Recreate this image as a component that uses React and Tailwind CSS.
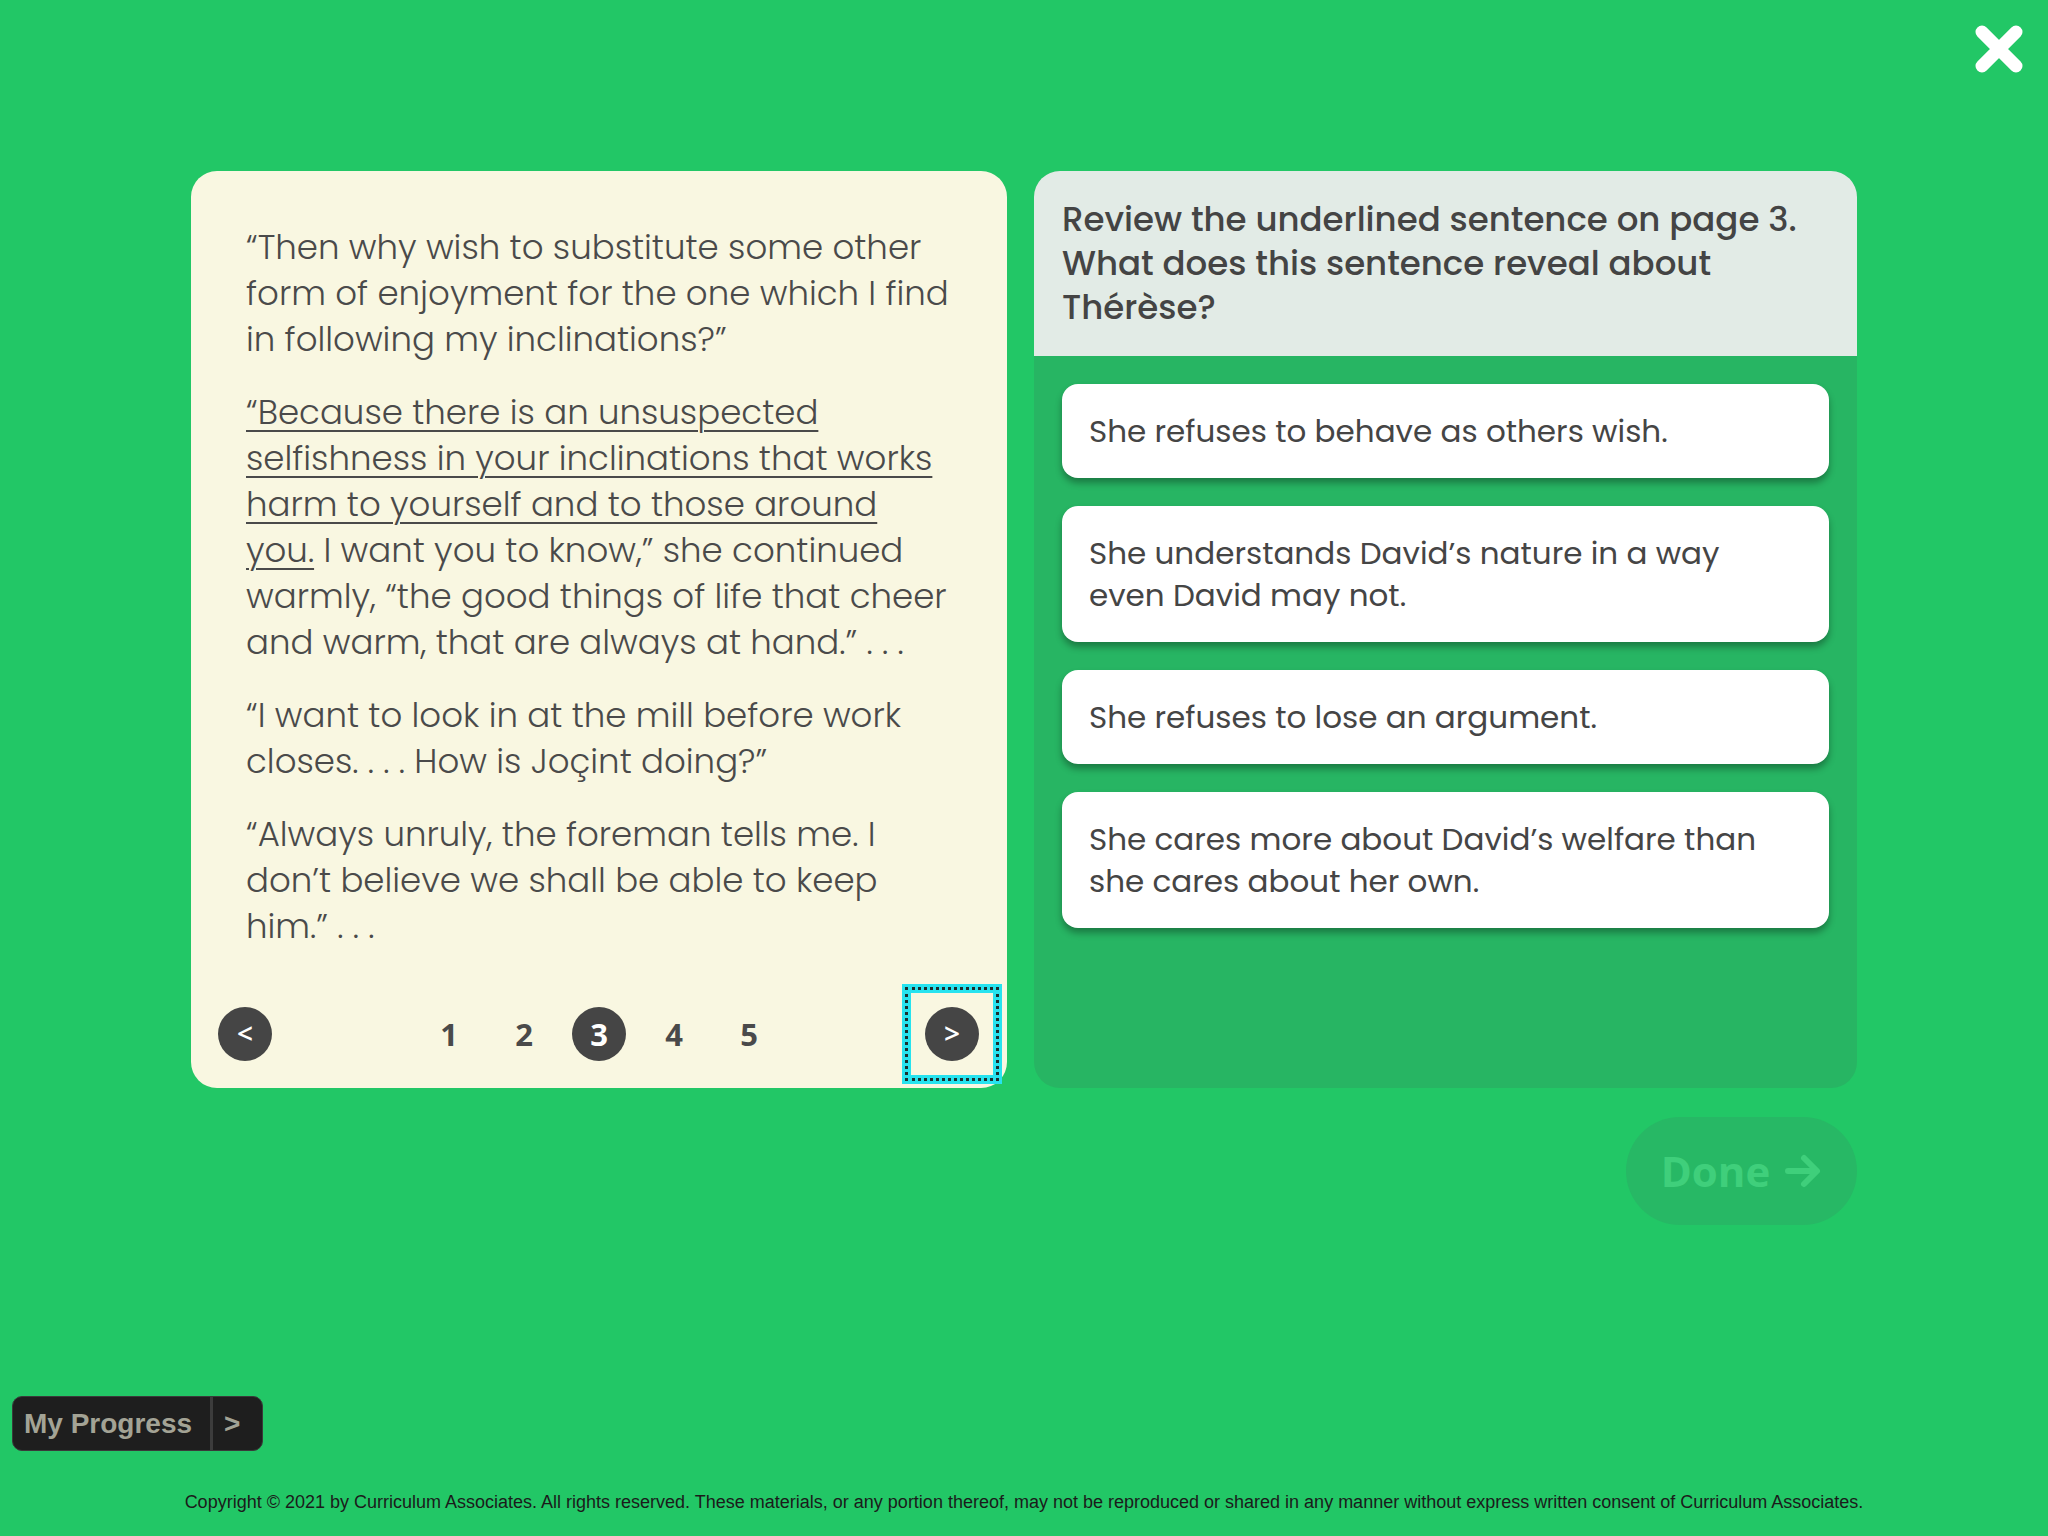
import React from "react";

function CloseIcon() {
  return (
    <svg width="54" height="54" viewBox="0 0 54 54" aria-hidden="true">
      <path d="M10 10 L44 44 M44 10 L10 44" stroke="#ffffff" strokeWidth="13" strokeLinecap="round" fill="none" />
    </svg>
  );
}

function Circle({ children }) {
  return (
    <div className="w-[54px] h-[54px] rounded-full bg-[#454545] text-white flex items-center justify-center text-[28px] font-semibold font-['Open_Sans',sans-serif] leading-none pb-[3px]">
      {children}
    </div>
  );
}

function PageNum({ n, active }) {
  return (
    <div
      className={
        active
          ? "w-[54px] h-[54px] rounded-full bg-[#454545] text-white flex items-center justify-center text-[31px] font-bold font-['Open_Sans',sans-serif]"
          : "w-[54px] h-[54px] flex items-center justify-center text-[31px] font-bold font-['Open_Sans',sans-serif] text-[#4a4a4a]"
      }
    >
      {n}
    </div>
  );
}

const answers = [
  "She refuses to behave as others wish.",
  "She understands David\u2019s nature in a way even David may not.",
  "She refuses to lose an argument.",
  "She cares more about David\u2019s welfare than she cares about her own.",
];

export default function App() {
  return (
    <div className="relative w-full h-[1536px] bg-[#22c766] flex flex-col font-['Poppins','Open_Sans',sans-serif] overflow-hidden">
      <button className="absolute top-[22px] right-[22px]" aria-label="Close">
        <CloseIcon />
      </button>

      <div className="pt-[171px] pl-[191px] flex gap-[27px]">
        {/* Passage card */}
        <div className="w-[816px] h-[917px] bg-[#f9f7e1] rounded-[26px] flex flex-col">
          <div className="pt-[53px] pl-[55px] pr-[55px] text-[#4a4a4a] text-[34px] leading-[46px] font-light flex flex-col gap-[27px]">
            <p>“Then why wish to substitute some other form of enjoyment for the one which I find in following my inclinations?”</p>
            <p>
              <span className="underline decoration-[2px] underline-offset-[6px]">
                “Because there is an unsuspected selfishness in your inclinations that works harm to yourself and to those around you.
              </span>{" "}
              I want you to know,” she continued warmly, “the good things of life that cheer and warm, that are always at hand.” . . .
            </p>
            <p>“I want to look in at the mill before work closes. . . . How is Joçint doing?”</p>
            <p>“Always unruly, the foreman tells me. I don’t believe we shall be able to keep him.” . . .</p>
          </div>

          <div className="mt-auto mb-[4px] h-[100px] grid grid-cols-[1fr_auto_1fr] items-center px-[5px]">
            <div className="flex pl-[22px]">
              <Circle>&lt;</Circle>
            </div>
            <div className="flex gap-[21px]">
              <PageNum n="1" />
              <PageNum n="2" />
              <PageNum n="3" active />
              <PageNum n="4" />
              <PageNum n="5" />
            </div>
            <div className="flex justify-end">
              <div className="w-[100px] h-[100px] border-[9px] border-[#27e3ef] outline-[3px] outline-dotted outline-[#1c2e2e] outline-offset-[-6px] flex items-center justify-center">
                <Circle>&gt;</Circle>
              </div>
            </div>
          </div>
        </div>

        {/* Question card */}
        <div className="w-[823px] h-[917px] rounded-[26px] overflow-hidden bg-[#27b563] flex flex-col">
          <div className="bg-[#e2ebe6] pt-[26px] pb-[27px] pl-[28px] pr-[28px] text-[#444444] text-[34px] leading-[44px] font-medium">
            Review the underlined sentence on page 3. What does this sentence reveal about Thérèse?
          </div>
          <div className="p-[28px] flex flex-col gap-[28px]">
            {answers.map((a) => (
              <div
                key={a}
                className="bg-white rounded-[16px] pl-[27px] pr-[41px] py-[26px] text-[#454545] text-[31px] leading-[42px] shadow-[0_5px_7px_rgba(0,0,0,0.32)]"
              >
                {a}
              </div>
            ))}
          </div>
        </div>
      </div>

      <div className="w-[1857px] flex justify-end mt-[29px]">
        <div className="w-[231px] h-[108px] rounded-full bg-[#27b865] flex items-center justify-center gap-[14px] text-[#3fcf7b] text-[42px] font-bold font-['Open_Sans',sans-serif]">
          <span className="pb-[2px]">Done</span>
          <svg width="38" height="36" viewBox="0 0 38 36" aria-hidden="true">
            <path d="M4 18 H32 M20 5 L33 18 L20 31" stroke="#3fcf7b" strokeWidth="6" strokeLinecap="round" strokeLinejoin="round" fill="none" />
          </svg>
        </div>
      </div>

      <div className="mt-auto pl-[12px]">
        <div className="w-[251px] h-[55px] rounded-[10px] bg-[#1e1e1e] border border-[#3a3a3a] flex items-stretch font-['Liberation_Sans',Arial,sans-serif] font-bold text-[28px] text-[#a3a395]">
          <div className="flex items-center pl-[11px] pr-[18px] border-r-[3px] border-[#3c3c3c]">My Progress</div>
          <div className="flex items-center pl-[11px]">&gt;</div>
        </div>
      </div>

      <p className="mt-[41px] mb-[24px] text-center text-[18px] leading-[20px] text-[#1b1b1b] font-['Liberation_Sans',Arial,sans-serif]">
        Copyright © 2021 by Curriculum Associates. All rights reserved. These materials, or any portion thereof, may not be reproduced or shared in any manner without express written consent of Curriculum Associates.
      </p>
    </div>
  );
}
